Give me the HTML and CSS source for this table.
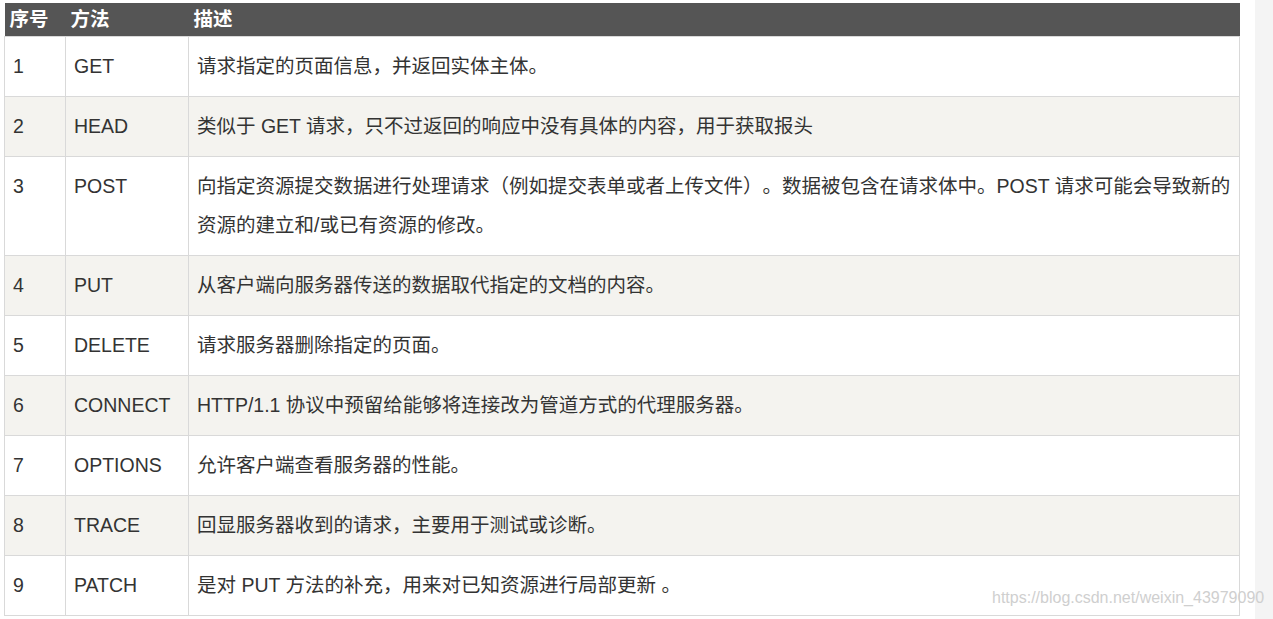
FILE: index.html
```html
<!DOCTYPE html>
<html lang="zh-CN">
<head>
<meta charset="utf-8">
<title>HTTP 请求方法</title>
<link rel="stylesheet" href="styles.css">
</head>
<body>
<div class="page">
  <main class="content">
    <table class="methods">
      <colgroup>
        <col class="c-num">
        <col class="c-method">
        <col class="c-desc">
      </colgroup>
      <thead>
        <tr><th>序号</th><th>方法</th><th>描述</th></tr>
      </thead>
      <tbody>
        <tr><td>1</td><td>GET</td><td>请求指定的页面信息，并返回实体主体。</td></tr>
        <tr><td>2</td><td>HEAD</td><td>类似于 GET 请求，只不过返回的响应中没有具体的内容，用于获取报头</td></tr>
        <tr><td>3</td><td>POST</td><td>向指定资源提交数据进行处理请求（例如提交表单或者上传文件）。数据被包含在请求体中。POST 请求可能会导致新的资源的建立和/或已有资源的修改。</td></tr>
        <tr><td>4</td><td>PUT</td><td>从客户端向服务器传送的数据取代指定的文档的内容。</td></tr>
        <tr><td>5</td><td>DELETE</td><td>请求服务器删除指定的页面。</td></tr>
        <tr><td>6</td><td>CONNECT</td><td>HTTP/1.1 协议中预留给能够将连接改为管道方式的代理服务器。</td></tr>
        <tr><td>7</td><td>OPTIONS</td><td>允许客户端查看服务器的性能。</td></tr>
        <tr><td>8</td><td>TRACE</td><td>回显服务器收到的请求，主要用于测试或诊断。</td></tr>
        <tr><td>9</td><td>PATCH</td><td>是对 PUT 方法的补充，用来对已知资源进行局部更新 。</td></tr>
      </tbody>
    </table>
    <div class="watermark">https://blog.csdn.net/weixin_43979090</div>
  </main>
  <aside class="rail"></aside>
</div>
</body>
</html>
```

FILE: styles.css
```css
html, body {
  margin: 0;
  padding: 0;
  background: #ffffff;
}

body {
  font-family: "Liberation Sans", "Noto Sans CJK SC", sans-serif;
  color: #333333;
  overflow: hidden;
  text-spacing-trim: space-all;
}

.page {
  display: flex;
  height: 619px;
}

.content {
  position: relative;
  width: 1255px;
  padding: 3px 0 0 4px;
  box-sizing: border-box;
}

.rail {
  width: 18px;
  background: #f4f4f4;
}

.methods {
  width: 1235px;
  border-collapse: collapse;
  table-layout: fixed;
  font-size: 19.5px;
}

.c-num { width: 61px; }
.c-method { width: 123px; }
.c-desc { width: 1051px; }

.methods th {
  background: #555555;
  color: #ffffff;
  font-weight: bold;
  text-align: left;
  line-height: 23px;
  padding: 5px;
  border: 0;
}

.methods td {
  border: 1px solid #d9d9d9;
  line-height: 39px;
  padding: 10px 4px 10px 8px;
  vertical-align: top;
  text-spacing-trim: space-all;
}

.methods tbody tr:nth-child(2n) td {
  background: #f4f3ef;
}

.watermark {
  position: absolute;
  left: 992px;
  top: 589px;
  font-size: 16px;
  color: #cfcfcf;
  white-space: nowrap;
}
```
